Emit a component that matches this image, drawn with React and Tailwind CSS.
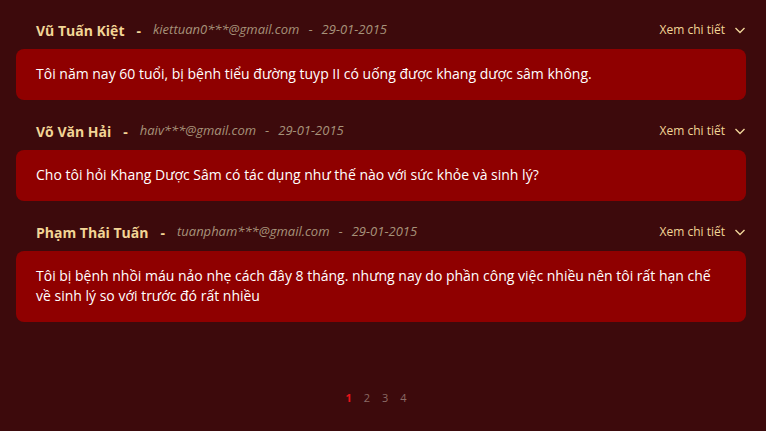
import React from 'react';

const questions = [
  {
    name: 'Vũ Tuấn Kiệt',
    email: 'kiettuan0***@gmail.com',
    date: '29-01-2015',
    text: 'Tôi năm nay 60 tuổi, bị bệnh tiểu đường tuyp II có uống được khang dược sâm không.',
  },
  {
    name: 'Võ Văn Hải',
    email: 'haiv***@gmail.com',
    date: '29-01-2015',
    text: 'Cho tôi hỏi Khang Dược Sâm có tác dụng như thế nào với sức khỏe và sinh lý?',
  },
  {
    name: 'Phạm Thái Tuấn',
    email: 'tuanpham***@gmail.com',
    date: '29-01-2015',
    text: 'Tôi bị bệnh nhồi máu nảo nhẹ cách đây 8 tháng. nhưng nay do phần công việc nhiều nên tôi rất hạn chế về sinh lý so với trước đó rất nhiều',
  },
];

const Chevron = () => (
  <svg width="12" height="12" viewBox="0 0 12 12" fill="none" stroke="#f0d49a" strokeWidth="1.4">
    <path d="M1.5 4l4.5 4.5L10.5 4" />
  </svg>
);

const App = () => {
  return (
    <div className="min-h-[431px] w-full bg-[#3d0a0c] pt-[15px] font-['Open_Sans',sans-serif]">
      {questions.map((q, i) => (
        <div key={i} className={i > 0 ? 'mt-4' : ''}>
          <div className="flex h-[30px] items-center justify-between pl-[36px] pr-[20px]">
            <div className="flex items-center">
              <span className="text-[14px] font-bold text-[#f2d596]">{q.name}</span>
              <span className="px-[12px] text-[14px] font-bold text-[#f2d596]">-</span>
              <span className="text-[13px] italic text-[#a7927a]">{q.email}</span>
              <span className="px-[9px] text-[13px] text-[#a7927a]">-</span>
              <span className="text-[13px] italic text-[#a7927a]">{q.date}</span>
            </div>
            <button className="flex items-center gap-[9px] text-[12px] text-[#f2d596]">
              Xem chi tiết <Chevron />
            </button>
          </div>
          <div className="ml-[16px] mr-[20px] mt-[4px] rounded-[8px] bg-[#8f0000] px-[20px] pt-[15px] pb-[16px] text-[14px] leading-[20px] text-white">
            {q.text}
          </div>
        </div>
      ))}
      <div className="mt-[70px] flex justify-center gap-[12px] pr-[14px] text-[11px] leading-none text-[#8b6b66]">
        <span className="font-bold text-[#e8141a]">1</span>
        <span>2</span>
        <span>3</span>
        <span>4</span>
      </div>
    </div>
  );
};

export default App;
